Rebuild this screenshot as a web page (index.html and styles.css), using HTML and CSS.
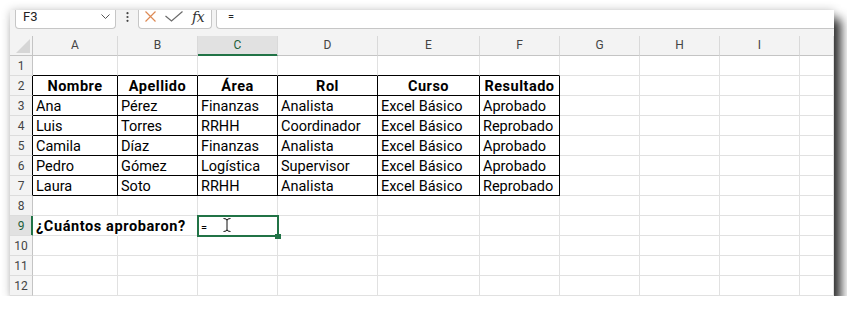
FILE: index.html
```html
<!DOCTYPE html>
<html lang="es">
<head>
<meta charset="utf-8">
<title>Excel</title>
<link rel="stylesheet" href="styles.css">
</head>
<body>
<div class="window">
  <div class="fbar">
    <div class="namebox">
      <span>F3</span>
      <svg class="chev" width="9" height="5" viewBox="0 0 9 5"><path d="M0.5 0.5 L4.5 4.5 L8.5 0.5" fill="none" stroke="#555" stroke-width="1"/></svg>
    </div>
    <div class="kebab">
      <svg width="3" height="10" viewBox="0 0 3 10"><circle cx="1.5" cy="1.2" r="1.1" fill="#444"/><circle cx="1.5" cy="5" r="1.1" fill="#444"/><circle cx="1.5" cy="8.8" r="1.1" fill="#444"/></svg>
    </div>
    <div class="fbtns">
      <svg class="ix" width="11" height="11" viewBox="0 0 11 11"><path d="M0.5 0.5 L10.5 10.5 M10.5 0.5 L0.5 10.5" stroke="#dd8a55" stroke-width="1.2" fill="none"/></svg>
      <svg class="ick" width="18" height="11" viewBox="0 0 18 11"><path d="M0.5 5 L6.5 10 L17.5 0.5" stroke="#6b6b6b" stroke-width="1.2" fill="none"/></svg>
      <span class="fx">fx</span>
    </div>
    <div class="finput">=</div>
  </div>
  <div class="hgap"></div>
  <div class="grid">
    <div class="corner"><svg width="14" height="14" viewBox="0 0 14 14"><path d="M14 0 L14 14 L0 14 Z" fill="#d6d6d6"/></svg></div>
    <div class="ch">A</div><div class="ch">B</div><div class="ch csel">C</div><div class="ch">D</div><div class="ch">E</div><div class="ch">F</div><div class="ch">G</div><div class="ch">H</div><div class="ch">I</div><div class="ch"></div>

    <div class="rh">1</div>
    <div class="c tt"></div><div class="c tt"></div><div class="c tt"></div><div class="c tt"></div><div class="c tt"></div><div class="c tt"></div><div class="c"></div><div class="c"></div><div class="c"></div><div class="c"></div>

    <div class="rh rhb">2</div>
    <div class="c t h">Nombre</div><div class="c t h">Apellido</div><div class="c t h">Área</div><div class="c t h">Rol</div><div class="c t h">Curso</div><div class="c t h">Resultado</div><div class="c"></div><div class="c"></div><div class="c"></div><div class="c"></div>

    <div class="rh rhb">3</div>
    <div class="c t">Ana</div><div class="c t">Pérez</div><div class="c t">Finanzas</div><div class="c t">Analista</div><div class="c t">Excel Básico</div><div class="c t">Aprobado</div><div class="c"></div><div class="c"></div><div class="c"></div><div class="c"></div>

    <div class="rh rhb">4</div>
    <div class="c t">Luis</div><div class="c t">Torres</div><div class="c t">RRHH</div><div class="c t">Coordinador</div><div class="c t">Excel Básico</div><div class="c t">Reprobado</div><div class="c"></div><div class="c"></div><div class="c"></div><div class="c"></div>

    <div class="rh rhb">5</div>
    <div class="c t">Camila</div><div class="c t">Díaz</div><div class="c t">Finanzas</div><div class="c t">Analista</div><div class="c t">Excel Básico</div><div class="c t">Aprobado</div><div class="c"></div><div class="c"></div><div class="c"></div><div class="c"></div>

    <div class="rh rhb">6</div>
    <div class="c t">Pedro</div><div class="c t">Gómez</div><div class="c t">Logística</div><div class="c t">Supervisor</div><div class="c t">Excel Básico</div><div class="c t">Aprobado</div><div class="c"></div><div class="c"></div><div class="c"></div><div class="c"></div>

    <div class="rh rhb">7</div>
    <div class="c t">Laura</div><div class="c t">Soto</div><div class="c t">RRHH</div><div class="c t">Analista</div><div class="c t">Excel Básico</div><div class="c t">Reprobado</div><div class="c"></div><div class="c"></div><div class="c"></div><div class="c"></div>

    <div class="rh">8</div>
    <div class="c"></div><div class="c"></div><div class="c"></div><div class="c"></div><div class="c"></div><div class="c"></div><div class="c"></div><div class="c"></div><div class="c"></div><div class="c"></div>

    <div class="rh rsel">9</div>
    <div class="c b ovf">¿Cuántos aprobaron?</div><div class="c"></div>
    <div class="c sel"><span class="eq">=</span><svg class="ibeam" width="8" height="14" viewBox="0 0 8 14"><path d="M0.5 0.5 Q4 0.5 4 2.5 Q4 0.5 7.5 0.5 M4 2.5 V11.5 M0.5 13.5 Q4 13.5 4 11.5 Q4 13.5 7.5 13.5" fill="none" stroke="#111" stroke-width="1"/></svg></div>
    <div class="c"></div><div class="c"></div><div class="c"></div><div class="c"></div><div class="c"></div><div class="c"></div><div class="c"></div>

    <div class="rh">10</div>
    <div class="c"></div><div class="c"></div><div class="c"></div><div class="c"></div><div class="c"></div><div class="c"></div><div class="c"></div><div class="c"></div><div class="c"></div><div class="c"></div>

    <div class="rh">11</div>
    <div class="c"></div><div class="c"></div><div class="c"></div><div class="c"></div><div class="c"></div><div class="c"></div><div class="c"></div><div class="c"></div><div class="c"></div><div class="c"></div>

    <div class="rh">12</div>
    <div class="c"></div><div class="c"></div><div class="c"></div><div class="c"></div><div class="c"></div><div class="c"></div><div class="c"></div><div class="c"></div><div class="c"></div><div class="c"></div>
  </div>
</div>
</body>
</html>
```
FILE: styles.css
```css
* { box-sizing: border-box; margin: 0; padding: 0; }

body {
  margin: 0;
  background: #ffffff;
  font-family: Roboto, "Liberation Sans", sans-serif;
}

.window {
  margin: 10px 0 0 10px;
  width: 824px;
  height: 286px;
  background: #ffffff;
  overflow: hidden;
  display: flex;
  flex-direction: column;
  box-shadow: 0 0 9px rgba(0, 0, 0, 0.2), 7px 9px 10px rgba(0, 0, 0, 0.8);
}

/* formula bar */
.fbar {
  flex: none;
  height: 19px;
  display: flex;
  background: #f3f3f3;
}

.namebox {
  margin-left: 5px;
  width: 101px;
  background: #fff;
  border: 1px solid #c6c6c6;
  border-top: none;
  border-radius: 0 0 4px 4px;
  display: flex;
  align-items: center;
  justify-content: space-between;
  padding: 0 5px 6px 7px;
  font-size: 13px;
  color: #222;
}

.chev { display: block; }

.kebab {
  width: 22px;
  display: flex;
  align-items: center;
  justify-content: center;
  padding-bottom: 5px;
}
.kebab svg { display: block; }

.fbtns {
  width: 74px;
  background: #fff;
  border: 1px solid #c6c6c6;
  border-top: none;
  border-radius: 0 0 4px 4px;
  display: flex;
  align-items: center;
  padding: 0 0 5px 6px;
}
.fbtns svg { display: block; }
.ick { margin-left: 9px; }
.fx {
  margin-left: 9px;
  font-family: "DejaVu Serif", "Liberation Serif", serif;
  font-style: italic;
  font-size: 14px;
  color: #333;
  letter-spacing: -0.5px;
  line-height: 12px;
}

.finput {
  flex: 1;
  margin-left: 4px;
  background: #fff;
  border: 1px solid #c6c6c6;
  border-top: none;
  border-right: none;
  border-radius: 0 0 0 4px;
  padding: 0 0 6px 11px;
  display: flex;
  align-items: center;
  font-size: 11px;
  color: #222;
}

.hgap {
  flex: none;
  height: 7px;
  background: #f3f3f3;
}

/* grid */
.grid {
  display: grid;
  grid-template-columns: 23px 85px 80px 80px 100px 102px 80px 80px 80px 80px 34px;
  grid-auto-rows: 20px;
}

.corner {
  background: #f3f3f3;
  border-right: 1px solid #c4c4c4;
  border-bottom: 1px solid #c4c4c4;
  display: flex;
  align-items: flex-end;
  justify-content: flex-end;
  padding: 0 2px 2px 0;
}
.corner svg { display: block; }

.ch {
  background: #f3f3f3;
  border-right: 1px solid #d9d9d9;
  border-bottom: 1px solid #c4c4c4;
  text-align: center;
  font-size: 12px;
  line-height: 19px;
  color: #444;
}
.ch.csel {
  background: #e1e1e1;
  border-bottom-color: #217346;
  box-shadow: inset 0 -1px 0 #217346;
  color: #1d5e3a;
}

.rh {
  background: #f3f3f3;
  border-right: 1px solid #c4c4c4;
  border-bottom: 1px solid #dcdcdc;
  text-align: center;
  font-size: 12px;
  line-height: 21px;
  color: #444;
}
.rh.rhb { border-right-color: #000; }
.rh.rsel {
  background: #e1e1e1;
  border-right-color: #217346;
  box-shadow: inset -1px 0 0 #217346;
  color: #1d5e3a;
}

.c {
  border-right: 1px solid #e1e1e1;
  border-bottom: 1px solid #e1e1e1;
  font-size: 14.5px;
  line-height: 19px;
  padding: 1px 3px 0;
  white-space: nowrap;
  color: #000;
  overflow: visible;
}
.c.tt { border-bottom-color: #000; }
.c.t { border-right-color: #000; border-bottom-color: #000; }
.c.h {
  font-weight: 700;
  text-align: center;
  letter-spacing: 0.5px;
}
.c.b { font-weight: 700; letter-spacing: 0.6px; }
.c.ovf { border-right-color: transparent; }

.c.sel {
  position: relative;
  z-index: 2;
  outline: 2px solid #217346;
  outline-offset: -1px;
}
.c.sel::after {
  content: "";
  position: absolute;
  right: -4px;
  bottom: -4px;
  width: 6px;
  height: 5px;
  background: #217346;
}
.eq { font-size: 11px; }
.ibeam {
  position: absolute;
  left: 25px;
  top: 2px;
  display: block;
}
```
